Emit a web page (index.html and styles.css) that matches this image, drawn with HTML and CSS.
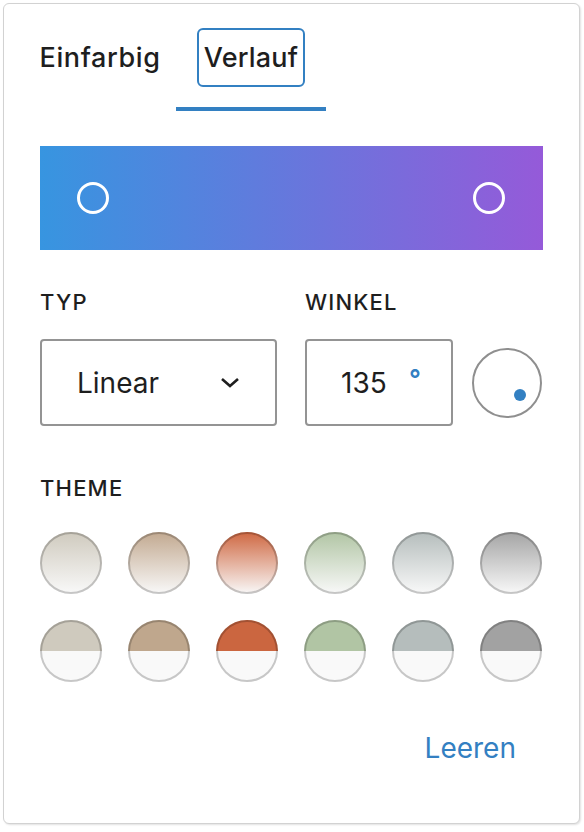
FILE: index.html
```html
<!DOCTYPE html>
<html lang="de">
<head>
    <meta charset="UTF-8">
    <meta name="viewport" content="width=device-width, initial-scale=1.0">
    <title>Farbverlauf</title>
    <link rel="stylesheet" href="styles.css">
</head>
<body>
    <div class="panel">
        <div class="tabs">
            <button class="tab">Einfarbig</button>
            <button class="tab active"><span class="tab-focus">Verlauf</span></button>
        </div>

        <div class="panel-body">
            <div class="gradient-bar">
                <span class="stop"></span>
                <span class="stop"></span>
            </div>

            <div class="controls">
                <div class="field field-type">
                    <div class="label">Typ</div>
                    <div class="select">
                        <span>Linear</span>
                        <svg class="chevron" width="22" height="12" viewBox="0 0 22 12">
                            <polyline points="3,2 11,9 19,2" fill="none" stroke="#1e1e1e" stroke-width="2.6"/>
                        </svg>
                    </div>
                </div>
                <div class="field field-angle">
                    <div class="label">Winkel</div>
                    <div class="angle-row">
                        <div class="number-input">
                            <span>135</span>
                            <span class="suffix">°</span>
                        </div>
                        <div class="angle-dial"><span class="dial-dot"></span></div>
                    </div>
                </div>
            </div>

            <div class="label theme-label">Theme</div>
            <div class="swatches">
                <span class="swatch fade" style="--c: #cfcabe"></span>
                <span class="swatch fade" style="--c: #c2a990"></span>
                <span class="swatch fade" style="--c: #cf6842"></span>
                <span class="swatch fade" style="--c: #b1c5a4"></span>
                <span class="swatch fade" style="--c: #b5bdbc"></span>
                <span class="swatch fade" style="--c: #a4a4a4"></span>
                <span class="swatch split" style="--c: #cfcabe"></span>
                <span class="swatch split" style="--c: #bfa78d"></span>
                <span class="swatch split" style="--c: #cb6640"></span>
                <span class="swatch split" style="--c: #b1c5a4"></span>
                <span class="swatch split" style="--c: #b5bdbc"></span>
                <span class="swatch split" style="--c: #a2a2a2"></span>
            </div>

            <div class="footer">
                <button class="clear">Leeren</button>
            </div>
        </div>
    </div>
</body>
</html>
```

FILE: styles.css
```css
body {
    margin: 0;
    padding: 3px;
    background-color: #ffffff;
    font-family: 'Inter', 'Noto Sans', sans-serif;
    color: #1e1e1e;
}
button {
    font-family: inherit;
    background: none;
    border: none;
    padding: 0;
    color: inherit;
    cursor: pointer;
}
.panel {
    box-sizing: border-box;
    width: 577px;
    height: 821px;
    border: 1px solid #d2d2d2;
    border-radius: 6px;
    box-shadow: 1px 1px 2px rgba(0, 0, 0, 0.12);
    background: #ffffff;
}
.tabs {
    display: flex;
    padding-left: 20px;
}
.tab {
    width: 152px;
    height: 107px;
    display: flex;
    align-items: center;
    justify-content: center;
    font-size: 27px;
    font-weight: 500;
    letter-spacing: 0.6px;
}
.tab.active {
    width: 150px;
    box-shadow: inset 0 -4px 0 #3380c2;
    letter-spacing: 0.2px;
}
.tab-focus {
    box-sizing: border-box;
    width: 108px;
    height: 59px;
    display: flex;
    align-items: center;
    justify-content: center;
    border: 2.5px solid #3380c2;
    border-radius: 6px;
}
.panel-body {
    padding: 35px 36px 0 36px;
}
.gradient-bar {
    height: 104px;
    display: flex;
    align-items: center;
    justify-content: space-between;
    padding: 0 38px 0 37px;
    background: linear-gradient(90deg, #3795e0 0%, #955ad9 100%);
}
.stop {
    box-sizing: border-box;
    width: 32px;
    height: 32px;
    border: 3px solid #ffffff;
    border-radius: 50%;
}
.label {
    font-size: 22px;
    font-weight: 500;
    text-transform: uppercase;
    line-height: 28px;
    letter-spacing: 1.2px;
}
.controls {
    display: flex;
    gap: 28px;
    margin-top: 38px;
}
.field .label {
    margin-bottom: 23px;
}
.select {
    box-sizing: border-box;
    width: 237px;
    height: 87px;
    display: flex;
    align-items: center;
    justify-content: space-between;
    padding: 0 34px 0 35px;
    border: 2px solid #949494;
    border-radius: 4px;
    font-size: 28px;
}
.angle-row {
    display: flex;
    align-items: center;
    gap: 19px;
}
.number-input {
    box-sizing: border-box;
    width: 148px;
    height: 87px;
    display: flex;
    align-items: center;
    padding: 0 30px 0 34px;
    border: 2px solid #949494;
    border-radius: 4px;
    font-size: 28px;
}
.suffix {
    margin-left: auto;
    color: #3380c2;
    font-weight: 600;
    font-size: 26px;
    margin-top: -8px;
}
.angle-dial {
    box-sizing: border-box;
    width: 70px;
    height: 70px;
    border: 2px solid #8f8f8f;
    border-radius: 50%;
    position: relative;
}
.dial-dot {
    position: absolute;
    width: 12px;
    height: 12px;
    border-radius: 50%;
    background: #3380c2;
    left: 40px;
    top: 39px;
}
.theme-label {
    margin-top: 48px;
}
.swatches {
    display: grid;
    grid-template-columns: repeat(6, 62px);
    column-gap: 26px;
    row-gap: 26px;
    margin-top: 30px;
}
.swatch {
    width: 62px;
    height: 62px;
    border-radius: 50%;
    box-shadow: inset 0 0 0 2px rgba(0, 0, 0, 0.2);
}
.swatch.fade {
    background: linear-gradient(to bottom, var(--c) 0%, #f9f9f9 100%);
}
.swatch.split {
    background: linear-gradient(to bottom, var(--c) 50%, #f9f9f9 50%);
}
.footer {
    display: flex;
    justify-content: flex-end;
    padding-right: 27px;
    margin-top: 46px;
}
.clear {
    font-size: 28px;
    color: #3380c2;
    line-height: 40px;
}
```
